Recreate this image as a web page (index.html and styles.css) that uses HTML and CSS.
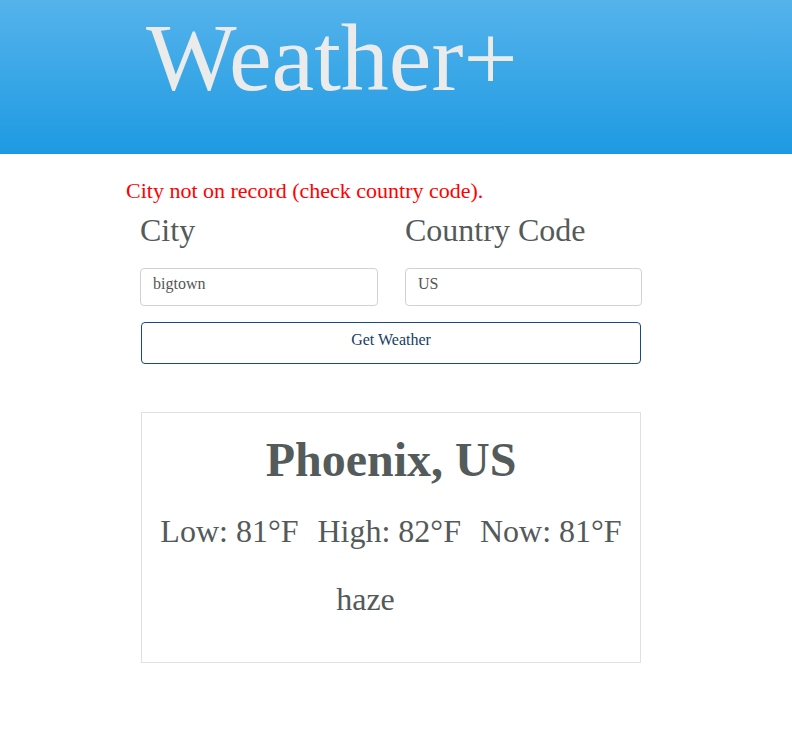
FILE: index.html
```html
<!DOCTYPE html>
<html lang="en">
<head>
<meta charset="utf-8">
<title>Weather+</title>
<link rel="stylesheet" href="styles.css">
</head>
<body>
<header class="header">
  <h1 class="brand">Weather+</h1>
</header>
<main class="container">
  <p class="error">City not on record (check country code).</p>
  <form class="form">
    <div class="fields">
      <label class="field">
        <span class="label">City</span>
        <input class="input" type="text" value="bigtown">
      </label>
      <label class="field">
        <span class="label">Country Code</span>
        <input class="input" type="text" value="US">
      </label>
    </div>
    <button class="button" type="button">Get Weather</button>
  </form>
  <section class="card">
    <h2 class="place">Phoenix, US</h2>
    <div class="temps">
      <span>Low: 81°F</span>
      <span>High: 82°F</span>
      <span>Now: 81°F</span>
    </div>
    <p class="desc">haze</p>
  </section>
</main>
</body>
</html>
```
FILE: styles.css
```css
* { box-sizing: border-box; }
html, body { margin: 0; padding: 0; }
body {
  font-family: "Liberation Serif", "Times New Roman", serif;
  background: #fff;
  color: #545a5a;
}
.header {
  height: 154px;
  background: linear-gradient(to bottom, #55b3eb 0%, #1e9ae2 100%);
  padding: 10px 0 0 146px;
}
.brand {
  margin: 0;
  font-weight: normal;
  font-size: 96px;
  line-height: 1;
  color: #ebebeb;
}
.container {
  width: 540px;
  margin: 0 auto;
  padding-top: 25px;
}
.error {
  margin: 0;
  color: #ff0000;
  font-size: 22px;
  line-height: 24px;
}
.form {
  margin: 8px 0 0 14px;
  width: 502px;
}
.fields {
  display: flex;
  gap: 27px;
}
.field {
  display: flex;
  flex-direction: column;
  width: 238px;
}
.field + .field { width: 237px; }
.label {
  font-size: 32px;
  line-height: 38px;
  color: #545a5a;
  margin-bottom: 19px;
}
.input {
  height: 38px;
  width: 100%;
  border: 1px solid #cfd3d8;
  border-radius: 4px;
  padding: 0 12px 7px;
  font-family: "Liberation Serif", "Times New Roman", serif;
  font-size: 16px;
  line-height: 20px;
  color: #555;
  background: #fff;
  vertical-align: top;
}
.button {
  display: block;
  margin: 16px 0 0 1px;
  width: 500px;
  height: 42px;
  border: 1px solid #174a80;
  border-radius: 4px;
  background: #fff;
  padding: 0 0 7px;
  font-family: "Liberation Serif", "Times New Roman", serif;
  font-size: 16px;
  line-height: 20px;
  color: #173d66;
  text-align: center;
  vertical-align: top;
}
.card {
  margin: 48px 0 0 15px;
  width: 500px;
  border: 1px solid #dfe0e3;
  padding: 19px 0 44px;
  text-align: center;
}
.place {
  margin: 0;
  font-size: 48px;
  line-height: 56px;
  font-weight: bold;
  color: #545b5b;
}
.temps {
  margin-top: 24px;
  display: flex;
  justify-content: center;
  gap: 19px;
  font-size: 32px;
  line-height: 38px;
}
.desc {
  margin: 30px 0 0;
  font-size: 32px;
  line-height: 38px;
  padding-right: 51px;
}
```
